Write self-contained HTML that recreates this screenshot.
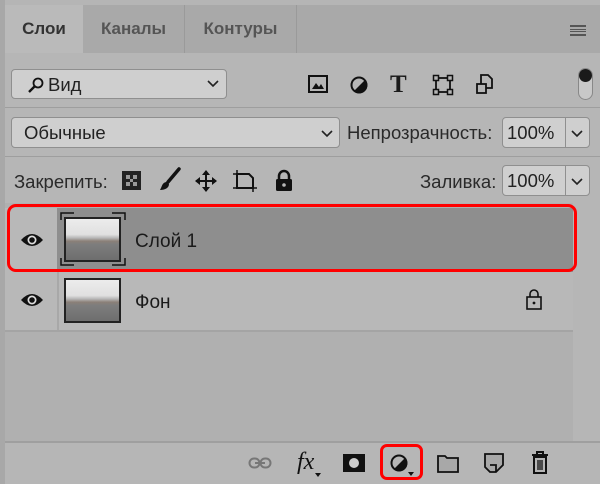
<!DOCTYPE html>
<html><head><meta charset="utf-8"><style>
*{box-sizing:border-box;margin:0;padding:0}
body{width:600px;height:484px;background:#b5b5b5;font-family:"Liberation Sans",sans-serif;color:#1a1a1a;position:relative;overflow:hidden}
.a{position:absolute}
.tab{top:5px;height:48px;font-weight:bold;font-size:17px;color:#555;line-height:48px;text-align:center}
.box{background:#cfcfcf;border:1px solid #8f8f8f;border-radius:4px}
svg{position:absolute;overflow:visible}
.lbl{font-size:18.5px;color:#222}
.th{background:linear-gradient(#ececec 0,#e0e0e0 38%,#b8b8b8 46%,#8b8078 54%,#7d7d7d 62%,#6e6e6e 100%)}
</style></head><body>
<div class="a" style="left:5px;top:5px;width:595px;height:48px;background:#a9a9a9"></div>
<div class="a tab" style="left:5px;width:78px;background:#bababa;height:49px;color:#333">Слои</div>
<div class="a" style="left:184px;top:5px;width:1px;height:48px;background:#9a9a9a"></div>
<div class="a" style="left:296px;top:5px;width:1px;height:48px;background:#9a9a9a"></div>
<div class="a tab" style="left:83px;width:101px">Каналы</div>
<div class="a tab" style="left:185px;width:111px">Контуры</div>
<div class="a" style="left:570px;top:25px;width:16px;height:11px;border-top:2px solid #555;border-bottom:2px solid #555"></div>
<div class="a" style="left:570px;top:29px;width:16px;height:3px;border-top:1px solid #555;border-bottom:1px solid #555"></div>
<div class="a" style="left:0;top:0;width:5px;height:484px;background:#a8a8a8"></div>
<div class="a" style="left:5px;top:53px;width:595px;height:431px;background:#b6b6b6"></div>

<div class="a box" style="left:11px;top:69px;width:216px;height:30px"></div>
<svg style="left:27px;top:77px" width="18" height="16"><circle cx="11" cy="6" r="4.5" fill="none" stroke="#111" stroke-width="1.8"/><path d="M7.5 9.5 L2 15" stroke="#111" stroke-width="2.4"/></svg>
<div class="a lbl" style="left:48px;top:74px">Вид</div>
<svg style="left:207px;top:80px" width="12" height="8"><path d="M1 1 L6 6 L11 1" fill="none" stroke="#222" stroke-width="1.6"/></svg>
<svg style="left:308px;top:75px" width="20" height="18"><rect x="1" y="1" width="18" height="16" fill="none" stroke="#111" stroke-width="2"/><path d="M4 14 L8 8 L11 12 L13 9 L16 14 Z" fill="#111"/></svg>
<svg style="left:350px;top:76px" width="18" height="18"><circle cx="9" cy="9" r="7.5" fill="none" stroke="#111" stroke-width="2"/><path d="M15 4 A7.5 7.5 0 0 1 4 15 Z" fill="#111"/></svg>
<div class="a" style="left:390px;top:71px;font-family:'Liberation Serif',serif;font-weight:bold;font-size:25px">T</div>
<svg style="left:433px;top:75px" width="20" height="20"><rect x="3" y="3" width="14" height="14" fill="none" stroke="#111" stroke-width="1.8"/><g fill="#b6b6b6" stroke="#111" stroke-width="1.5"><rect x="0.5" y="0.5" width="5" height="5"/><rect x="14.5" y="0.5" width="5" height="5"/><rect x="0.5" y="14.5" width="5" height="5"/><rect x="14.5" y="14.5" width="5" height="5"/></g></svg>
<svg style="left:476px;top:74px" width="18" height="22"><path d="M5 1 H12 L16 5 V14 H5 Z" fill="none" stroke="#111" stroke-width="1.8"/><rect x="1" y="10" width="9" height="9" fill="#b6b6b6" stroke="#111" stroke-width="1.8"/></svg>
<div class="a" style="left:578px;top:68px;width:15px;height:32px;border:1px solid #888;border-radius:8px;background:#c8c8c8"></div>
<div class="a" style="left:579px;top:69px;width:13px;height:13px;border-radius:50%;background:#1a1a1a"></div>

<div class="a" style="left:5px;top:107px;width:595px;height:1px;background:#9e9e9e"></div>
<div class="a box" style="left:11px;top:117px;width:329px;height:31px"></div>
<div class="a lbl" style="left:24px;top:122px">Обычные</div>
<svg style="left:321px;top:130px" width="12" height="8"><path d="M1 1 L6 6 L11 1" fill="none" stroke="#222" stroke-width="1.6"/></svg>
<div class="a lbl" style="left:347px;top:122px;color:#2a2a2a">Непрозрачность:</div>
<div class="a box" style="left:502px;top:117px;width:88px;height:31px"></div>
<div class="a" style="left:565px;top:117px;width:1px;height:31px;background:#8f8f8f"></div>
<div class="a lbl" style="left:507px;top:122px">100%</div>
<svg style="left:571px;top:130px" width="12" height="8"><path d="M1 1 L6 6 L11 1" fill="none" stroke="#222" stroke-width="1.6"/></svg>

<div class="a" style="left:5px;top:156px;width:595px;height:1px;background:#9e9e9e"></div>
<div class="a lbl" style="left:14px;top:171px;color:#2a2a2a">Закрепить:</div>
<svg style="left:122px;top:171px" width="19" height="19"><rect x="0" y="0" width="19" height="19" fill="#222"/><g fill="#999"><rect x="4" y="4" width="4" height="4"/><rect x="11" y="4" width="4" height="4"/><rect x="8" y="8" width="3" height="3"/><rect x="4" y="11" width="4" height="4"/><rect x="11" y="11" width="4" height="4"/></g></svg>
<svg style="left:159px;top:168px" width="22" height="24"><path d="M20 1 L9 14" stroke="#111" stroke-width="3.5" stroke-linecap="round"/><path d="M8 14 C3 14 3 19 1 22 C6 22 10 20 10 16 Z" fill="#111"/></svg>
<svg style="left:195px;top:170px" width="22" height="22"><path d="M11 1 V21 M1 11 H21" stroke="#111" stroke-width="2"/><path d="M11 0 L7 5 H15 Z M11 22 L7 17 H15 Z M0 11 L5 7 V15 Z M22 11 L17 7 V15 Z" fill="#111"/></svg>
<svg style="left:233px;top:170px" width="24" height="22"><path d="M4 4 H16 L20 8 V18 H4 Z" fill="none" stroke="#111" stroke-width="2"/><path d="M0 4 H3 M4 0 V3 M21 18 H24 M20 19 V22 M0 18 H3" stroke="#111" stroke-width="1.5"/></svg>
<svg style="left:275px;top:170px" width="18" height="22"><path d="M4 9 V6 A5 5 0 0 1 14 6 V9" fill="none" stroke="#111" stroke-width="2.5"/><rect x="1" y="9" width="16" height="12" rx="1.5" fill="#111"/><circle cx="9" cy="15" r="1.8" fill="#b6b6b6"/></svg>
<div class="a lbl" style="left:420px;top:171px;color:#2a2a2a">Заливка:</div>
<div class="a box" style="left:502px;top:165px;width:88px;height:31px"></div>
<div class="a" style="left:565px;top:165px;width:1px;height:31px;background:#8f8f8f"></div>
<div class="a lbl" style="left:507px;top:170px">100%</div>
<svg style="left:571px;top:178px" width="12" height="8"><path d="M1 1 L6 6 L11 1" fill="none" stroke="#222" stroke-width="1.6"/></svg>

<div class="a" style="left:5px;top:203px;width:568px;height:238px;background:#b0b0b0"></div>
<div class="a" style="left:573px;top:203px;width:27px;height:238px;background:#b6b6b6"></div>
<div class="a" style="left:5px;top:208px;width:52px;height:122px;background:#b8b8b8"></div>
<div class="a" style="left:57px;top:208px;width:516px;height:64px;background:#8e8e8e"></div>
<div class="a" style="left:57px;top:272px;width:516px;height:58px;background:#b8b8b8"></div>
<div class="a" style="left:5px;top:330px;width:568px;height:2px;background:#a4a4a4"></div>
<div class="a" style="left:57px;top:272px;width:2px;height:58px;background:#a8a8a8"></div>
<svg style="left:20px;top:232px" width="24" height="16"><path d="M1 8 Q12 -4 23 8 Q12 20 1 8 Z" fill="#111"/><circle cx="12" cy="8" r="4.5" fill="#ddd"/><circle cx="12" cy="8" r="2.8" fill="#111"/></svg>
<svg style="left:20px;top:292px" width="24" height="16"><path d="M1 8 Q12 -4 23 8 Q12 20 1 8 Z" fill="#111"/><circle cx="12" cy="8" r="4.5" fill="#ddd"/><circle cx="12" cy="8" r="2.8" fill="#111"/></svg>
<div class="a th" style="left:64px;top:217px;width:57px;height:45px;border:2px solid #222"></div>
<svg style="left:60px;top:212px" width="66" height="54"><path d="M1 8 V1 H14 M52 1 H65 V8 M1 46 V53 H14 M52 53 H65 V46" fill="none" stroke="#111" stroke-width="1.5"/></svg>
<div class="a th" style="left:64px;top:278px;width:57px;height:45px;border:2px solid #222"></div>
<div class="a" style="left:135px;top:231px;font-size:19px">Слой 1</div>
<div class="a" style="left:135px;top:292px;font-size:19px">Фон</div>
<svg style="left:526px;top:289px" width="16" height="21"><path d="M4 8 V5 A4 4 0 0 1 12 5 V8" fill="none" stroke="#111" stroke-width="1.6"/><rect x="1" y="8" width="14" height="12" fill="none" stroke="#111" stroke-width="1.6"/><circle cx="8" cy="14" r="1.4" fill="#111"/></svg>
<div class="a" style="left:7px;top:204px;width:570px;height:68px;border:3.5px solid #f00;border-radius:9px"></div>

<div class="a" style="left:5px;top:441px;width:595px;height:2px;background:#9f9f9f"></div>
<div class="a" style="left:5px;top:443px;width:595px;height:41px;background:#b6b6b6"></div>
<svg style="left:248px;top:457px" width="24" height="12"><rect x="1.5" y="1.5" width="10" height="9" rx="4.5" fill="none" stroke="#777" stroke-width="2"/><rect x="12.5" y="1.5" width="10" height="9" rx="4.5" fill="none" stroke="#777" stroke-width="2"/><path d="M7 6 H17" stroke="#777" stroke-width="2"/></svg>
<div class="a" style="left:297px;top:449px;font-family:'Liberation Serif',serif;font-style:italic;font-size:24px;color:#111">fx</div>
<svg style="left:315px;top:473px" width="6" height="4"><path d="M0 0 H6 L3 4 Z" fill="#111"/></svg>
<svg style="left:343px;top:454px" width="22" height="18"><rect width="22" height="18" fill="#111"/><circle cx="11" cy="9" r="5" fill="#ccc"/></svg>
<svg style="left:390px;top:453px" width="20" height="20"><circle cx="9" cy="10" r="7.5" fill="none" stroke="#111" stroke-width="2"/><path d="M15 5 A7.5 7.5 0 0 1 4 16 Z" fill="#111"/></svg>
<svg style="left:408px;top:472px" width="6" height="4"><path d="M0 0 H6 L3 4 Z" fill="#111"/></svg>
<div class="a" style="left:380px;top:444px;width:43px;height:36px;border:3.5px solid #f00;border-radius:7px"></div>
<svg style="left:437px;top:454px" width="22" height="19"><path d="M1 2 H8 L10 4 H21 V18 H1 Z" fill="#a8a8a8" stroke="#111" stroke-width="1.8"/></svg>
<svg style="left:484px;top:453px" width="20" height="20"><path d="M1 1 H19 V12 L12 19 H6 L1 14 Z" fill="#a8a8a8" stroke="#111" stroke-width="1.8"/><path d="M6 12 H12 V19" fill="none" stroke="#111" stroke-width="1.8"/></svg>
<svg style="left:531px;top:451px" width="18" height="23"><path d="M1 4 H17 M6 4 V1 H12 V4" fill="none" stroke="#111" stroke-width="2"/><rect x="3" y="6" width="12" height="16" fill="none" stroke="#111" stroke-width="2"/><path d="M7 9 V19 M9 9 V19 M11 9 V19" stroke="#111" stroke-width="1.3"/></svg>
</body></html>
